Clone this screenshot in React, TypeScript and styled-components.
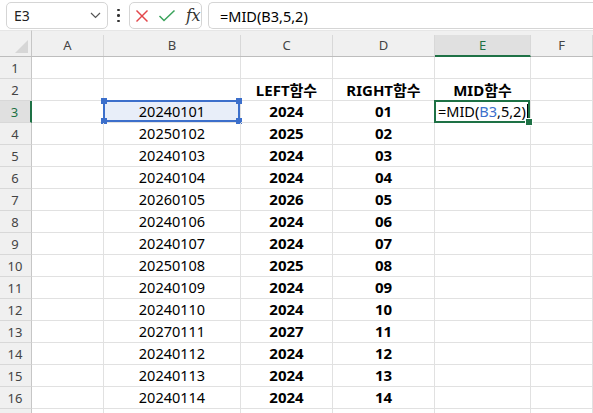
import React from 'react';
import styled, { createGlobalStyle, css } from 'styled-components';

const GlobalStyle = createGlobalStyle`
  html, body {
    margin: 0;
    padding: 0;
    background: #ffffff;
  }
  * {
    box-sizing: border-box;
  }
`;

const FONT = `"Noto Sans", "Noto Sans CJK KR", sans-serif`;
const GRID_LINE = '#e1e1e1';
const HEADER_BG = '#f0f0f0';
const HEADER_ACTIVE = '#e0e0e0';
const EXCEL_GREEN = '#1e7145';
const REF_BLUE = '#3c6fcb';

const codes = [
  '20240101', '20250102', '20240103', '20240104', '20260105', '20240106', '20240107',
  '20250108', '20240109', '20240110', '20270111', '20240112', '20240113', '20240114',
];

const columns = ['A', 'B', 'C', 'D', 'E', 'F'];

const Sheet = styled.div`
  width: 593px;
  height: 413px;
  overflow: hidden;
  font-family: ${FONT};
  background: #ffffff;
  color: #000;
`;

const FormulaBar = styled.div`
  height: 30px;
  display: flex;
  align-items: flex-start;
  padding: 2px 0 0 6px;
`;

const NameBox = styled.div`
  width: 102px;
  height: 27px;
  border: 1px solid #d5d5d5;
  border-radius: 5px;
  display: flex;
  align-items: center;
  justify-content: space-between;
  padding: 0 6px 0 7px;
  font-size: 14px;
  color: #222;
`;

const Dots = styled.div`
  width: 21px;
  height: 27px;
  display: flex;
  flex-direction: column;
  align-items: center;
  justify-content: center;
  gap: 3px;

  span {
    width: 2.5px;
    height: 2.5px;
    border-radius: 50%;
    background: #333;
  }
`;

const IconBox = styled.div`
  width: 73px;
  height: 27px;
  border: 1px solid #d5d5d5;
  border-radius: 5px;
  display: flex;
  align-items: center;
  padding: 0 0 0 5px;
  gap: 9px;
`;

const Fx = styled.span`
  font-family: "DejaVu Serif", "Liberation Serif", serif;
  font-style: italic;
  font-size: 16px;
  color: #333;
  margin-left: 1px;
  letter-spacing: -0.5px;
`;

const FormulaInput = styled.div`
  flex: 1;
  margin-left: 6px;
  height: 27px;
  border: 1px solid #d5d5d5;
  border-right: none;
  border-radius: 5px 0 0 5px;
  display: flex;
  align-items: center;
  padding-left: 11px;
  font-size: 14.5px;
`;

const Grid = styled.div`
  display: grid;
  grid-template-columns: 32px 72px 137px 92px 102px 96px 1fr;
  grid-template-rows: 27px;
  grid-auto-rows: 22px;
  background: #ffffff;
`;

const Corner = styled.div`
  position: relative;
  background: ${HEADER_BG};
  border-right: 1px solid #c6c6c6;
  border-bottom: 1px solid #bdbdbd;
  border-top: 1px solid #e6e6e6;

  &::after {
    content: '';
    position: absolute;
    right: 3px;
    bottom: 3px;
    width: 0;
    height: 0;
    border-left: 13px solid transparent;
    border-bottom: 13px solid #d6d6d6;
  }
`;

const ColHeader = styled.div<{ $active?: boolean }>`
  background: ${HEADER_BG};
  border-top: 1px solid #e6e6e6;
  border-bottom: 1px solid #bdbdbd;
  display: flex;
  align-items: stretch;
  font-size: 13px;
  color: #444;

  div {
    flex: 1;
    margin-top: 4px;
    display: flex;
    align-items: center;
    justify-content: center;
    border-right: 1px solid #d8d8d8;
    padding-bottom: 1px;
    ${(p) =>
      p.$active &&
      css`
        background: ${HEADER_ACTIVE};
        color: ${EXCEL_GREEN};
        border-bottom: 2px solid ${EXCEL_GREEN};
        margin-bottom: -1px;
      `}
  }
`;

const RowHeader = styled.div<{ $active?: boolean }>`
  background: ${(p) => (p.$active ? HEADER_ACTIVE : HEADER_BG)};
  color: ${(p) => (p.$active ? EXCEL_GREEN : '#444')};
  border-right: ${(p) => (p.$active ? `2px solid ${EXCEL_GREEN}` : '1px solid #c6c6c6')};
  border-bottom: 1px solid #d8d8d8;
  font-size: 13px;
  display: flex;
  align-items: center;
  justify-content: center;
  padding-right: 1px;
`;

const Cell = styled.div<{ $bold?: boolean; $align?: 'left' | 'center'; $fill?: string }>`
  position: relative;
  border-right: 1px solid ${GRID_LINE};
  border-bottom: 1px solid ${GRID_LINE};
  background: ${(p) => p.$fill || 'transparent'};
  display: flex;
  align-items: center;
  justify-content: ${(p) => (p.$align === 'left' ? 'flex-start' : 'center')};
  padding: ${(p) => (p.$align === 'left' ? '0 0 0 3px' : '0 0 1px 0')};
  font-size: ${(p) => (p.$bold ? '15px' : '14.5px')};
  font-weight: ${(p) => (p.$bold ? 700 : 400)};
  white-space: nowrap;
  overflow: visible;
`;

const RefFrame = styled.div`
  position: absolute;
  left: -1px;
  top: -1px;
  right: 0;
  bottom: 0;
  border: 2px solid ${REF_BLUE};
  pointer-events: none;
`;

const Handle = styled.span<{ $x: 'left' | 'right'; $y: 'top' | 'bottom' }>`
  position: absolute;
  width: 6px;
  height: 6px;
  background: ${REF_BLUE};
  ${(p) => (p.$x === 'left' ? 'left: -4px;' : 'right: -4px;')}
  ${(p) => (p.$y === 'top' ? 'top: -4px;' : 'bottom: -4px;')}
`;

const ActiveFrame = styled.div`
  position: absolute;
  left: -1px;
  top: -1px;
  right: 0;
  bottom: -1px;
  border: 2px solid ${EXCEL_GREEN};
  pointer-events: none;
  z-index: 2;
`;

const FillHandle = styled.span`
  position: absolute;
  right: -4px;
  bottom: -4px;
  width: 6px;
  height: 6px;
  background: ${EXCEL_GREEN};
  outline: 1px solid #ffffff;
`;

const Ref = styled.span`
  color: ${REF_BLUE};
`;

const Caret = styled.span`
  display: inline-block;
  width: 1px;
  height: 18px;
  background: #000;
  margin-left: 1px;
  vertical-align: middle;
`;

const Chevron = () => (
  <svg width="11" height="7" viewBox="0 0 11 7">
    <polyline points="1,1 5.5,5.5 10,1" fill="none" stroke="#555" strokeWidth="1.2" />
  </svg>
);

const CrossIcon = () => (
  <svg width="14" height="14" viewBox="0 0 14 14">
    <line x1="1.5" y1="1.5" x2="12.5" y2="12.5" stroke="#e3474b" strokeWidth="1.5" />
    <line x1="12.5" y1="1.5" x2="1.5" y2="12.5" stroke="#e3474b" strokeWidth="1.5" />
  </svg>
);

const CheckIcon = () => (
  <svg width="18" height="14" viewBox="0 0 18 14">
    <polyline points="1.5,7 6,11.5 16.5,1.5" fill="none" stroke="#3aa35b" strokeWidth="1.5" />
  </svg>
);

const Formula = ({ caret }: { caret?: boolean }) => (
  <span>
    =MID({caret ? <Ref>B3</Ref> : 'B3'},5,2)
    {caret && <Caret />}
  </span>
);

export default function App() {
  const rows = Array.from({ length: 16 }, (_, i) => i + 1);

  return (
    <>
      <GlobalStyle />
      <Sheet>
        <FormulaBar>
          <NameBox>
            <span>E3</span>
            <Chevron />
          </NameBox>
          <Dots>
            <span />
            <span />
            <span />
          </Dots>
          <IconBox>
            <CrossIcon />
            <CheckIcon />
            <Fx>fx</Fx>
          </IconBox>
          <FormulaInput>
            <Formula />
          </FormulaInput>
        </FormulaBar>

        <Grid>
          <Corner />
          {columns.map((c) => (
            <ColHeader key={c} $active={c === 'E'}>
              <div>{c}</div>
            </ColHeader>
          ))}

          {rows.map((r) => {
            const code = r >= 3 ? codes[r - 3] : undefined;
            return (
              <React.Fragment key={r}>
                <RowHeader $active={r === 3}>{r}</RowHeader>
                <Cell />
                <Cell $fill={r === 3 ? '#e8eef9' : undefined}>
                  {code}
                  {r === 3 && (
                    <RefFrame>
                      <Handle $x="left" $y="top" />
                      <Handle $x="right" $y="top" />
                      <Handle $x="left" $y="bottom" />
                      <Handle $x="right" $y="bottom" />
                    </RefFrame>
                  )}
                </Cell>
                <Cell $bold>{r === 2 ? 'LEFT함수' : code?.slice(0, 4)}</Cell>
                <Cell $bold>{r === 2 ? 'RIGHT함수' : code?.slice(-2)}</Cell>
                {r === 3 ? (
                  <Cell $align="left">
                    <Formula caret />
                    <ActiveFrame>
                      <FillHandle />
                    </ActiveFrame>
                  </Cell>
                ) : (
                  <Cell $bold>{r === 2 ? 'MID함수' : ''}</Cell>
                )}
                <Cell />
              </React.Fragment>
            );
          })}

          {/* partially visible next row, cut by the window edge */}
          <RowHeader />
          {columns.map((c) => (
            <Cell key={`tail-${c}`} />
          ))}
        </Grid>
      </Sheet>
    </>
  );
}
